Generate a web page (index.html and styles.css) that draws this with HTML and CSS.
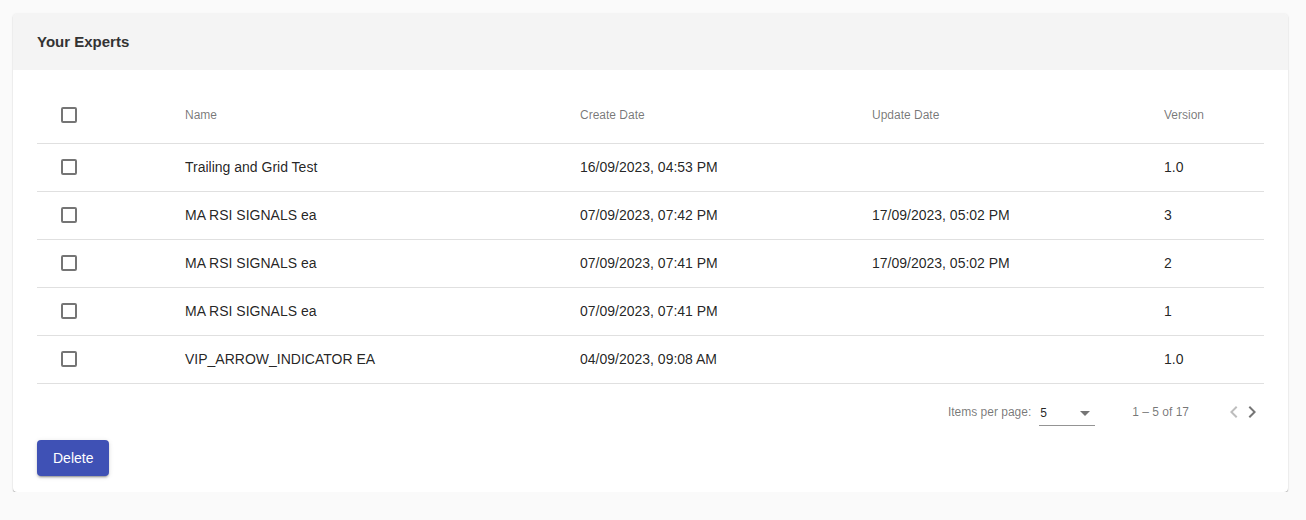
FILE: index.html
```html
<!DOCTYPE html>
<html lang="en">
<head>
    <meta charset="UTF-8">
    <meta name="viewport" content="width=device-width, initial-scale=1.0">
    <title>Your Experts</title>
    <link rel="stylesheet" href="styles.css">
</head>
<body>
    <div class="card">
        <div class="card-header">
            <h2>Your Experts</h2>
        </div>

        <div class="card-body">
            <table class="experts-table">
                <colgroup>
                    <col class="col-select">
                    <col class="col-name">
                    <col class="col-date">
                    <col class="col-date">
                    <col>
                </colgroup>
                <thead>
                    <tr>
                        <th><span class="checkbox"></span></th>
                        <th>Name</th>
                        <th>Create Date</th>
                        <th>Update Date</th>
                        <th>Version</th>
                    </tr>
                </thead>
                <tbody>
                    <tr>
                        <td><span class="checkbox"></span></td>
                        <td>Trailing and Grid Test</td>
                        <td>16/09/2023, 04:53 PM</td>
                        <td></td>
                        <td>1.0</td>
                    </tr>
                    <tr>
                        <td><span class="checkbox"></span></td>
                        <td>MA RSI SIGNALS ea</td>
                        <td>07/09/2023, 07:42 PM</td>
                        <td>17/09/2023, 05:02 PM</td>
                        <td>3</td>
                    </tr>
                    <tr>
                        <td><span class="checkbox"></span></td>
                        <td>MA RSI SIGNALS ea</td>
                        <td>07/09/2023, 07:41 PM</td>
                        <td>17/09/2023, 05:02 PM</td>
                        <td>2</td>
                    </tr>
                    <tr>
                        <td><span class="checkbox"></span></td>
                        <td>MA RSI SIGNALS ea</td>
                        <td>07/09/2023, 07:41 PM</td>
                        <td></td>
                        <td>1</td>
                    </tr>
                    <tr>
                        <td><span class="checkbox"></span></td>
                        <td>VIP_ARROW_INDICATOR EA</td>
                        <td>04/09/2023, 09:08 AM</td>
                        <td></td>
                        <td>1.0</td>
                    </tr>
                </tbody>
            </table>

            <div class="paginator">
                <span class="page-size-label">Items per page:</span>
                <div class="page-size-select">
                    <span>5</span>
                    <span class="select-arrow"></span>
                </div>
                <span class="range-label">1 &ndash; 5 of 17</span>
                <button class="page-btn disabled" aria-label="Previous page">
                    <svg viewBox="3 0 18 24" width="18" height="24"><path d="M15.41 7.41L14 6l-6 6 6 6 1.41-1.41L10.83 12z"/></svg>
                </button>
                <button class="page-btn" aria-label="Next page">
                    <svg viewBox="3 0 18 24" width="18" height="24"><path d="M10 6L8.59 7.41 13.17 12l-4.58 4.59L10 18l6-6z"/></svg>
                </button>
            </div>

            <button class="delete-btn">Delete</button>
        </div>
    </div>
</body>
</html>
```

FILE: styles.css
```css
* {
    margin: 0;
    padding: 0;
    box-sizing: border-box;
    font-family: 'Liberation Sans', Arial, sans-serif;
}

body {
    background: #fafafa;
    padding: 14px 18px 0 13px;
}

.card {
    background: #fff;
    border-radius: 4px;
    overflow: hidden;
    box-shadow: 0 1px 1px 0 rgba(0, 0, 0, 0.3), 0 0 2px 0 rgba(0, 0, 0, 0.1);
}

.card-header {
    height: 56px;
    display: flex;
    align-items: center;
    padding: 0 24px 1px;
    background: #f4f4f4;
}

.card-header h2 {
    font-size: 15px;
    font-weight: bold;
    color: #333;
}

.card-body {
    padding: 17px 24px 16px;
}

.experts-table {
    width: 100%;
    border-collapse: collapse;
    table-layout: fixed;
}

.col-select {
    width: 148px;
}

.col-name {
    width: 395px;
}

.col-date {
    width: 292px;
}

.experts-table th,
.experts-table td {
    text-align: left;
    padding: 0;
    border-bottom: 1px solid rgba(0, 0, 0, 0.12);
    vertical-align: middle;
}

.experts-table th:first-child,
.experts-table td:first-child {
    padding-left: 24px;
}

.experts-table th {
    height: 56px;
    font-size: 12px;
    font-weight: normal;
    color: rgba(0, 0, 0, 0.54);
}

.experts-table td {
    height: 48px;
    font-size: 14px;
    color: rgba(0, 0, 0, 0.87);
}

.checkbox {
    display: block;
    width: 16px;
    height: 16px;
    border: 2px solid rgba(0, 0, 0, 0.54);
    border-radius: 2px;
}

.paginator {
    height: 56px;
    display: flex;
    align-items: center;
    justify-content: flex-end;
    font-size: 12px;
    color: rgba(0, 0, 0, 0.54);
}

.page-size-label {
    margin-right: 8px;
}

.page-size-select {
    width: 56px;
    height: 24px;
    display: flex;
    align-items: center;
    justify-content: space-between;
    padding: 0 5px 0 1px;
    border-bottom: 1px solid rgba(0, 0, 0, 0.42);
    color: rgba(0, 0, 0, 0.87);
    margin-top: 4px;
}

.select-arrow {
    width: 0;
    height: 0;
    border-left: 5px solid transparent;
    border-right: 5px solid transparent;
    border-top: 5px solid rgba(0, 0, 0, 0.54);
}

.range-label {
    margin: 0 36px 0 37px;
}

.page-btn {
    width: 18px;
    height: 24px;
    border: none;
    background: none;
    display: flex;
    align-items: center;
    justify-content: center;
    cursor: pointer;
}

.page-btn:last-child {
    margin-right: 3px;
}

.page-btn svg {
    fill: rgba(0, 0, 0, 0.54);
}

.page-btn.disabled svg {
    fill: rgba(0, 0, 0, 0.26);
}

.delete-btn {
    display: block;
    height: 36px;
    min-width: 64px;
    padding: 0 16px;
    border: none;
    border-radius: 4px;
    background: #3f51b5;
    color: #fff;
    font-size: 14px;
    cursor: pointer;
    box-shadow: 0 3px 1px -2px rgba(0, 0, 0, 0.2), 0 2px 2px 0 rgba(0, 0, 0, 0.14), 0 1px 5px 0 rgba(0, 0, 0, 0.12);
}
```
